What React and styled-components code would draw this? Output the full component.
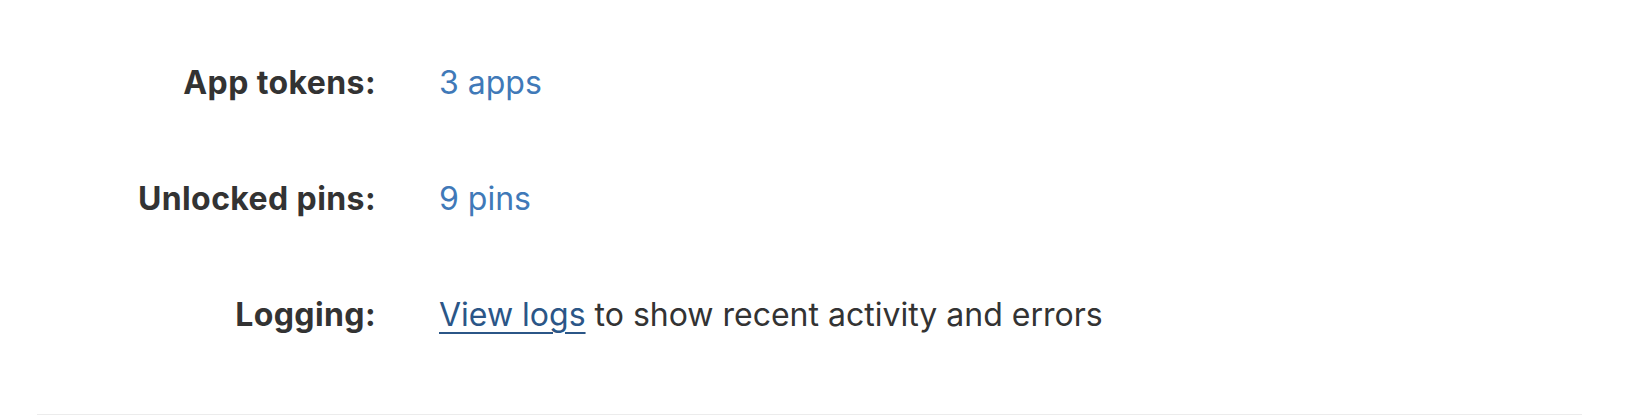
import React from 'react';
import styled, { createGlobalStyle } from 'styled-components';

const GlobalStyle = createGlobalStyle`
  body {
    margin: 0;
    background: #ffffff;
    font-family: Inter, "Liberation Sans", sans-serif;
    color: #333333;
  }
`

const Section = styled.div`
  margin: 0 58px 0 37px;
  padding: 25px 0 41px;
  border-bottom: 1px solid #ececec;
`

const Row = styled.div`
  display: grid;
  grid-template-columns: 339px 1fr;
  column-gap: 63px;
  padding: 38px 0;
  font-size: 32px;
  line-height: 40px;
`

const Label = styled.div`
  text-align: right;
  font-weight: 700;
  letter-spacing: 0.4px;
  color: #333333;
`

const Value = styled.div`
  color: #333333;
`

const Link = styled.a`
  color: ${props => props.dark ? '#2b5687' : '#4079b8'};
  text-decoration: ${props => props.underline ? 'underline' : 'none'};
  text-decoration-thickness: 2px;
  text-underline-offset: 6px;
  cursor: pointer;
`

const App = () => (
  <>
    <GlobalStyle />
    <Section>
      <Row>
        <Label>App tokens:</Label>
        <Value><Link>3 apps</Link></Value>
      </Row>
      <Row>
        <Label>Unlocked pins:</Label>
        <Value><Link>9 pins</Link></Value>
      </Row>
      <Row>
        <Label>Logging:</Label>
        <Value>
          <Link dark underline>View logs</Link> to show recent activity and errors
        </Value>
      </Row>
    </Section>
  </>
)

export default App
